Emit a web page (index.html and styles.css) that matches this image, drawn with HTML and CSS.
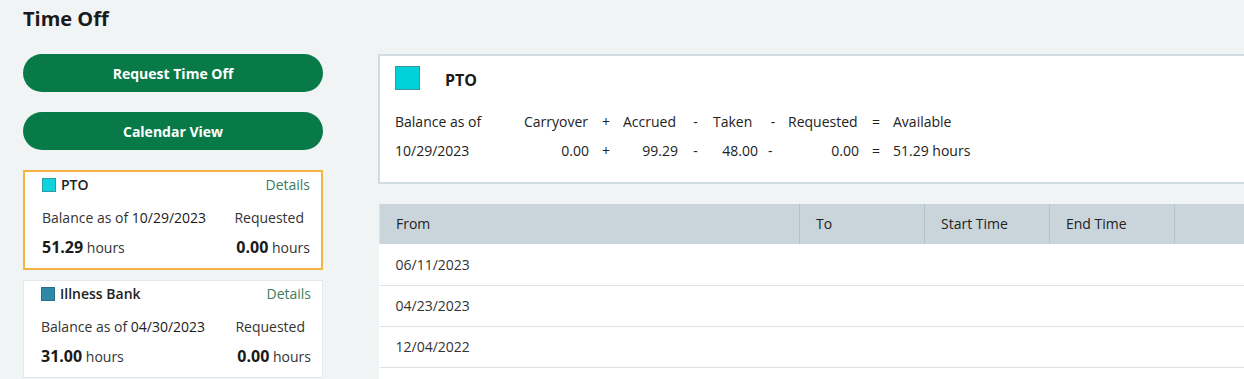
FILE: index.html
```html
<!DOCTYPE html>
<html>
<head>
<meta charset="utf-8">
<link rel="stylesheet" href="styles.css">
</head>
<body>
<div class="page">
  <h1 class="title">Time Off</h1>
  <div class="layout">
    <aside class="sidebar">
      <button class="btn">Request Time Off</button>
      <button class="btn">Calendar View</button>
      <div class="card card-selected">
        <div class="card-row">
          <span class="name"><span class="swatch sw-pto"></span>PTO</span>
          <span class="link">Details</span>
        </div>
        <div class="card-row row-mid">
          <span class="muted">Balance as of <span class="strong">10/29/2023</span></span>
          <span class="muted req">Requested</span>
        </div>
        <div class="card-row">
          <span><b class="num">51.29</b> hours</span>
          <span><b class="num">0.00</b> hours</span>
        </div>
      </div>
      <div class="card">
        <div class="card-row">
          <span class="name"><span class="swatch sw-ill"></span>Illness Bank</span>
          <span class="link">Details</span>
        </div>
        <div class="card-row row-mid">
          <span class="muted">Balance as of <span class="strong">04/30/2023</span></span>
          <span class="muted req">Requested</span>
        </div>
        <div class="card-row">
          <span><b class="num">31.00</b> hours</span>
          <span><b class="num">0.00</b> hours</span>
        </div>
      </div>
    </aside>
    <main class="content">
      <section class="panel">
        <div class="panel-head">
          <span class="big-swatch"></span>
          <span class="panel-name">PTO</span>
        </div>
        <div class="calc">
          <span>Balance as of</span>
          <span>Carryover</span>
          <span class="c">+</span>
          <span>Accrued</span>
          <span class="c">-</span>
          <span>Taken</span>
          <span class="c">-</span>
          <span>Requested</span>
          <span class="c">=</span>
          <span>Available</span>

          <span>10/29/2023</span>
          <span class="r">0.00</span>
          <span class="c">+</span>
          <span class="r">99.29</span>
          <span class="c">-</span>
          <span class="r">48.00</span>
          <span class="c lft">-</span>
          <span class="r">0.00</span>
          <span class="c">=</span>
          <span>51.29 hours</span>
        </div>
      </section>
      <table class="grid">
        <thead>
          <tr>
            <th class="c-from">From</th>
            <th class="c-std">To</th>
            <th class="c-std">Start Time</th>
            <th class="c-std">End Time</th>
            <th class="c-last"></th>
          </tr>
        </thead>
        <tbody>
          <tr><td>06/11/2023</td><td></td><td></td><td></td><td></td></tr>
          <tr><td>04/23/2023</td><td></td><td></td><td></td><td></td></tr>
          <tr><td>12/04/2022</td><td></td><td></td><td></td><td></td></tr>
          <tr><td>&nbsp;</td><td></td><td></td><td></td><td></td></tr>
        </tbody>
      </table>
    </main>
  </div>
</div>
</body>
</html>
```

FILE: styles.css
```css
* { box-sizing: border-box; }
html, body {
  margin: 0;
  padding: 0;
  background: #f1f4f5;
  overflow: hidden;
  height: 379px;
}
body {
  font-family: "Open Sans", "Noto Sans", sans-serif;
  color: #222;
  font-size: 14px;
}
.page {
  padding: 0 0 0 23px;
  width: 1500px;
}
.title {
  margin: 0;
  padding-top: 5px;
  height: 54px;
  font-size: 20px;
  line-height: 28px;
  font-weight: 700;
  color: #1a1a1a;
}
.layout {
  display: flex;
  gap: 55px;
  align-items: flex-start;
}
.sidebar {
  width: 300px;
  display: flex;
  flex-direction: column;
  gap: 20px;
}
.btn {
  height: 38px;
  border: none;
  border-radius: 19px;
  background: #087a47;
  color: #fff;
  font-family: inherit;
  font-weight: 700;
  font-size: 14px;
  padding: 0;
}
.card {
  background: #fff;
  border: 1px solid #e2e7ea;
  padding: 3px 11px 11px 17px;
}
.card + .card { margin-top: -10px; }
.card-selected {
  border: 2px solid #f4b43f;
}
.card-row {
  display: flex;
  justify-content: space-between;
  align-items: center;
  height: 20px;
  line-height: 20px;
  color: #333;
}
.row-mid { margin: 13px 0 9px; }
.req { margin-right: 6px; }
.name {
  display: flex;
  align-items: center;
  font-weight: 600;
  color: #222;
}
.swatch {
  width: 14px;
  height: 14px;
  margin-right: 5px;
  border: 1px solid #3c8a96;
}
.sw-pto { background: #0fd3dd; border-color: #2f9aa5; }
.sw-ill { background: #2e88a8; border-color: #2a6f86; }
.link { color: #3c7d5e; }
.muted { color: #333; }
.strong { color: #1a1a1a; font-weight: 500; }
.num { font-size: 16px; font-weight: 700; color: #1a1a1a; }

.content {
  width: 1100px;
}
.panel {
  background: #fff;
  border: 2px solid #d3dce1;
  border-right: none;
  padding: 10px 15px 21px 15px;
}
.panel-head {
  display: flex;
  align-items: center;
  height: 24px;
}
.big-swatch {
  width: 25px;
  height: 24px;
  background: #00d1d9;
  border: 1px solid #3a97a0;
  margin-right: 25px;
}
.panel-name {
  font-size: 16px;
  font-weight: 700;
  color: #1a1a1a;
  padding-top: 3px;
}
.calc {
  margin-top: 22px;
  display: grid;
  grid-template-columns: 129px 65px 34px 55px 35px 45px 30px 71px 34px auto;
  row-gap: 9px;
  line-height: 20px;
  color: #222;
}
.calc .r { text-align: right; }
.calc .c { text-align: center; }
.calc .lft { text-align: left; padding-left: 10px; }

.grid {
  margin-top: 20px;
  margin-left: 1px;
  border-collapse: collapse;
  width: 1100px;
  background: #fff;
}
.grid th {
  background: #c9d5db;
  height: 40px;
  text-align: left;
  font-weight: 400;
  color: #222;
  padding: 0 16px 1px;
  border-left: 1px solid #b4c1c8;
}
.grid th:first-child { border-left: 1px solid #dbe3e7; }
.c-from { width: 420px; }
.c-std { width: 125px; }
.grid td {
  height: 41px;
  padding: 0 16px;
  border-bottom: 1px solid #dce2e5;
  color: #333;
}
```
